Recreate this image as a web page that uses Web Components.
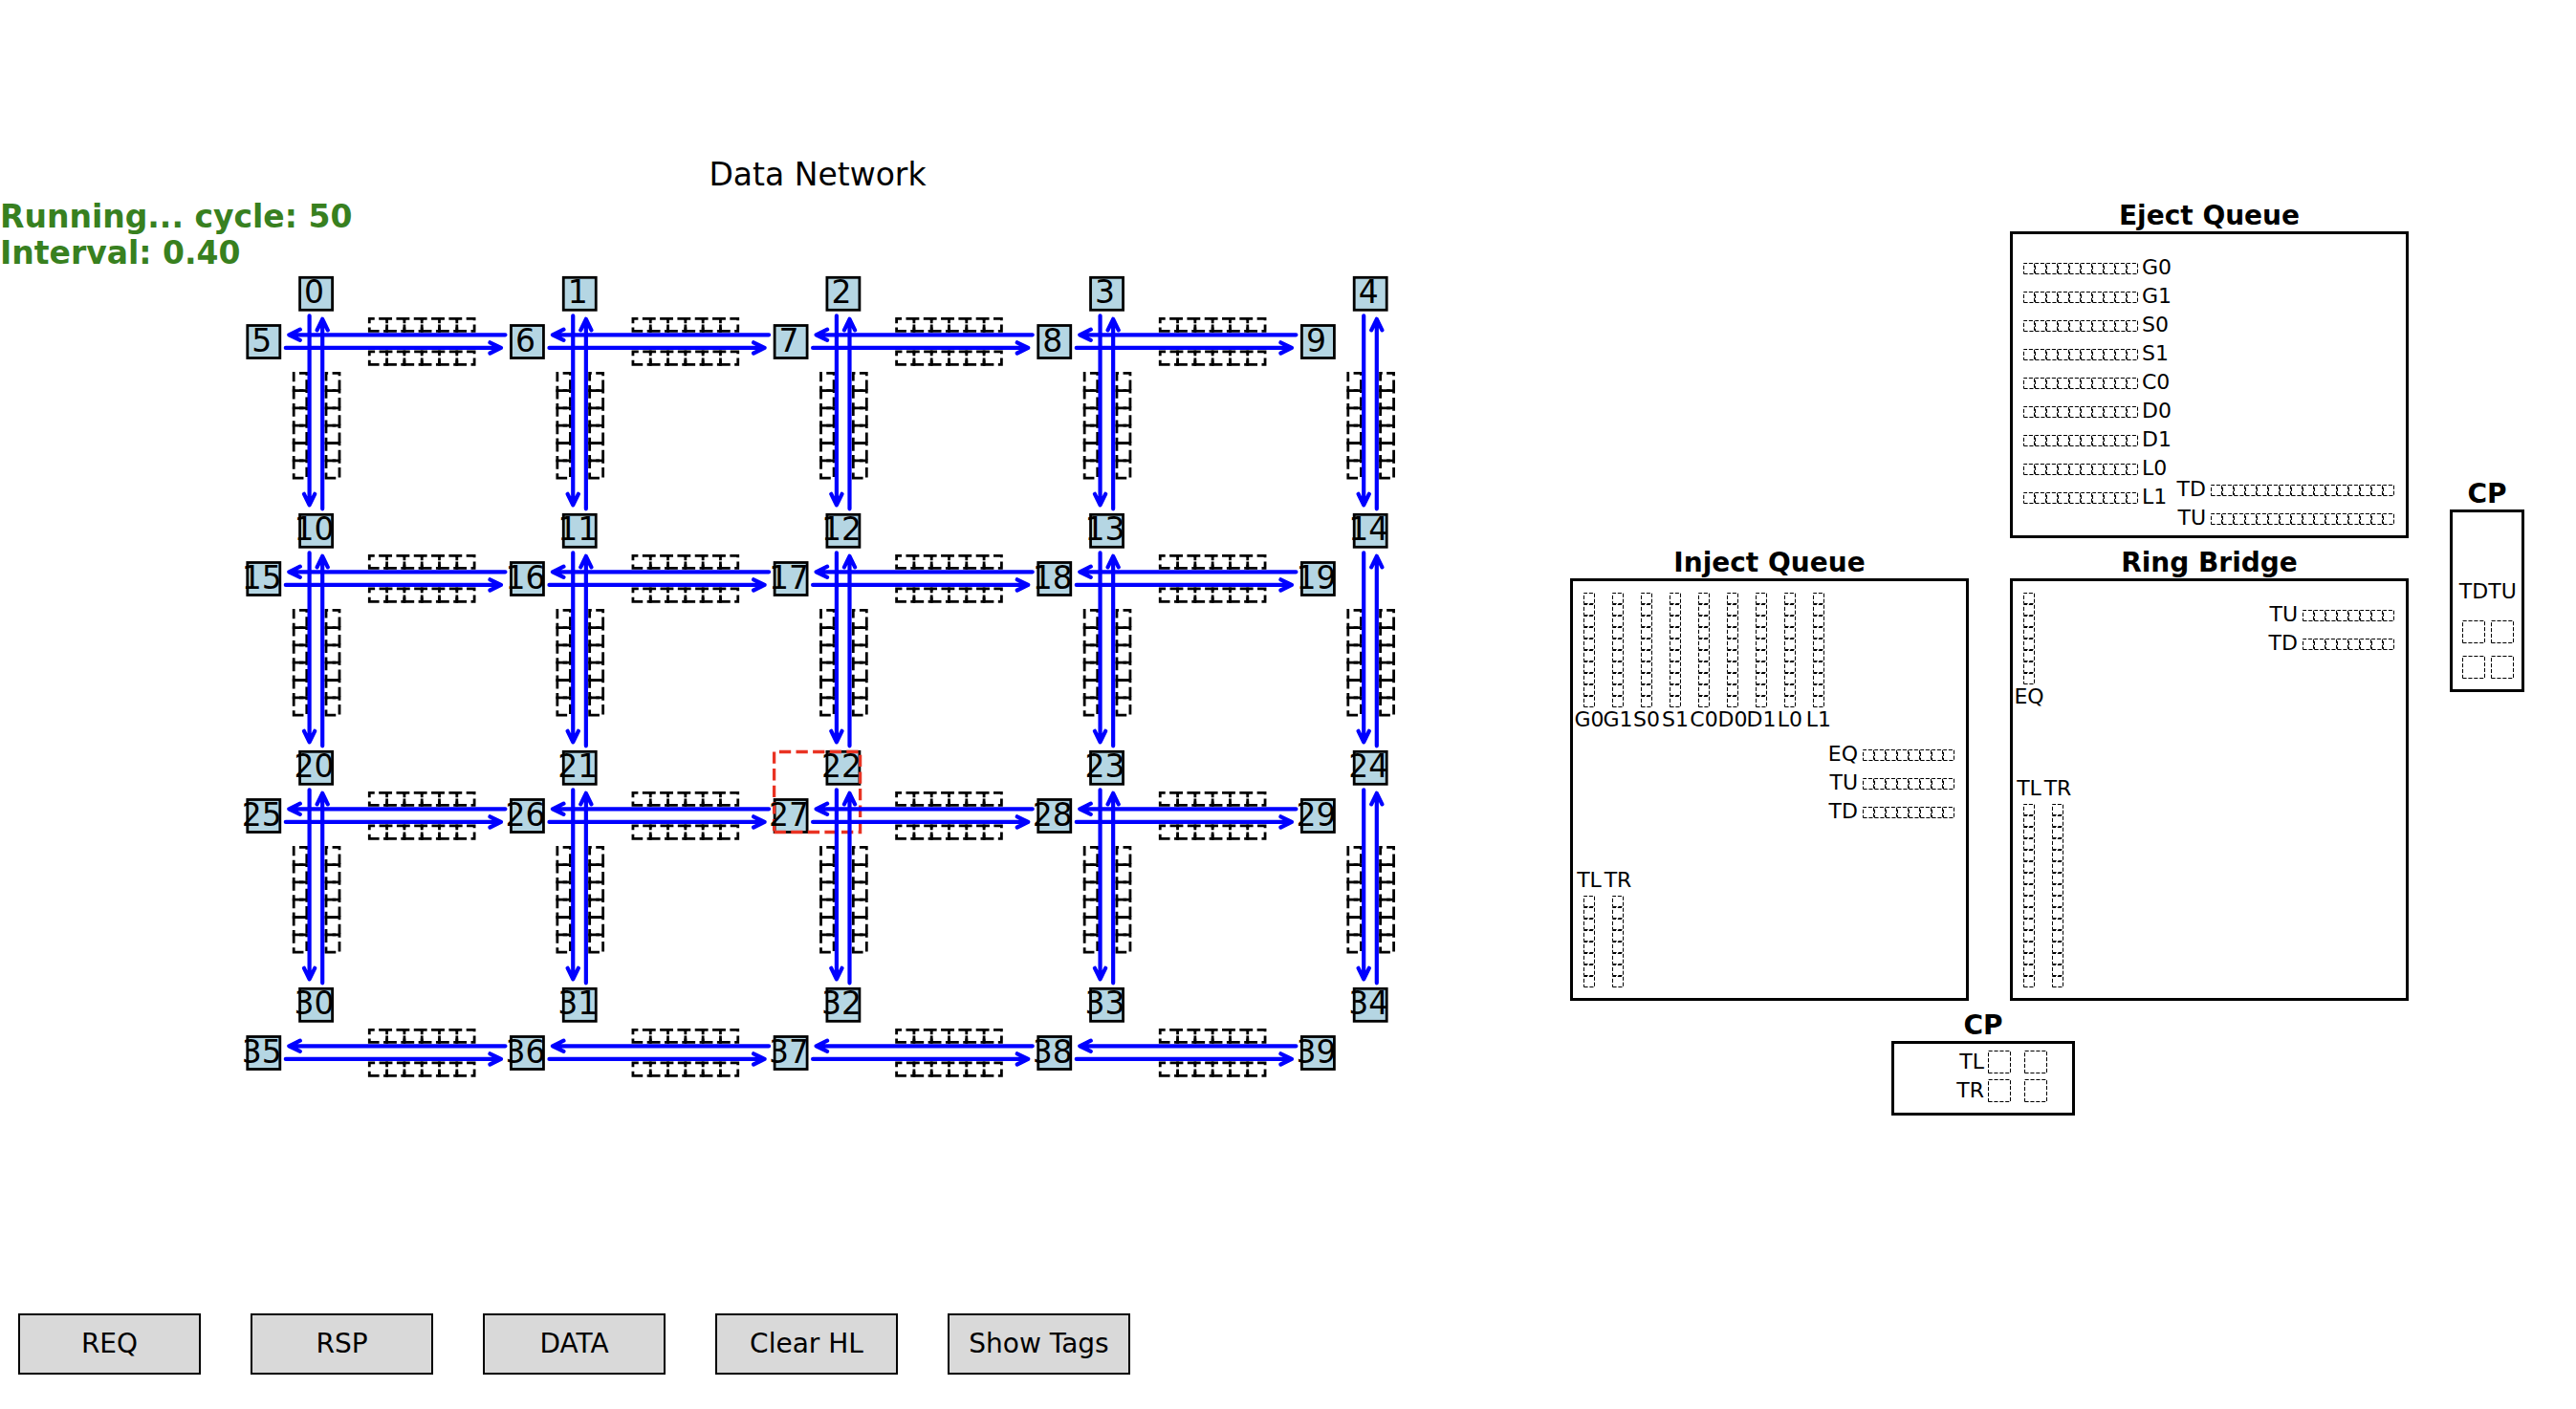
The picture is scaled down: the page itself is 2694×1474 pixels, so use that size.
<!DOCTYPE html>
<html lang="en">
<head>
<meta charset="utf-8">
<title>Data Network</title>
<style>
  html, body { margin: 0; background: #fff; }
  body { font-family: "DejaVu Sans", sans-serif; color: #000; }
</style>
</head>
<body>
<noc-app>
  <run-status slot="status" cycle="50" interval="0.40"></run-status>
  <mesh-view slot="mesh" columns="5" rows="4"></mesh-view>
  <queue-panel slot="detail" class="eject" heading="Eject Queue">
    <div class="stack" slot="content">
      <queue-row name="G0" cells="10" side="end"></queue-row>
      <queue-row name="G1" cells="10" side="end"></queue-row>
      <queue-row name="S0" cells="10" side="end"></queue-row>
      <queue-row name="S1" cells="10" side="end"></queue-row>
      <queue-row name="C0" cells="10" side="end"></queue-row>
      <queue-row name="D0" cells="10" side="end"></queue-row>
      <queue-row name="D1" cells="10" side="end"></queue-row>
      <queue-row name="L0" cells="10" side="end"></queue-row>
      <queue-row name="L1" cells="10" side="end"></queue-row>
    </div>
    <div class="stack low" slot="content">
      <queue-row name="TD" cells="16"></queue-row>
      <queue-row name="TU" cells="16"></queue-row>
    </div>
  </queue-panel>
  <queue-panel slot="detail" class="inject" heading="Inject Queue">
    <div class="lanes" slot="content">
      <queue-lane name="G0" cells="10" side="end"></queue-lane>
      <queue-lane name="G1" cells="10" side="end"></queue-lane>
      <queue-lane name="S0" cells="10" side="end"></queue-lane>
      <queue-lane name="S1" cells="10" side="end"></queue-lane>
      <queue-lane name="C0" cells="10" side="end"></queue-lane>
      <queue-lane name="D0" cells="10" side="end"></queue-lane>
      <queue-lane name="D1" cells="10" side="end"></queue-lane>
      <queue-lane name="L0" cells="10" side="end"></queue-lane>
      <queue-lane name="L1" cells="10" side="end"></queue-lane>
    </div>
    <div class="stack right" slot="content">
      <queue-row name="EQ" cells="8"></queue-row>
      <queue-row name="TU" cells="8"></queue-row>
      <queue-row name="TD" cells="8"></queue-row>
    </div>
    <div class="lanes bottom" slot="content">
      <queue-lane name="TL" cells="8"></queue-lane>
      <queue-lane name="TR" cells="8"></queue-lane>
    </div>
  </queue-panel>
  <queue-panel slot="detail" class="bridge" heading="Ring Bridge">
    <div class="split" slot="content">
      <queue-lane name="EQ" cells="8" side="end"></queue-lane>
      <div class="stack right">
        <queue-row name="TU" cells="8"></queue-row>
        <queue-row name="TD" cells="8"></queue-row>
      </div>
    </div>
    <div class="lanes bottom" slot="content">
      <queue-lane name="TL" cells="16"></queue-lane>
      <queue-lane name="TR" cells="16"></queue-lane>
    </div>
  </queue-panel>
  <queue-panel slot="detail" class="cp-v" heading="CP">
    <div class="lanes bottom" slot="content">
      <queue-lane name="TD" cells="2" size="large"></queue-lane>
      <queue-lane name="TU" cells="2" size="large"></queue-lane>
    </div>
  </queue-panel>
  <queue-panel slot="detail" class="cp-h" heading="CP">
    <div class="stack right" slot="content">
      <queue-row name="TL" cells="2" size="large"></queue-row>
      <queue-row name="TR" cells="2" size="large"></queue-row>
    </div>
  </queue-panel>
  <tool-button slot="tools">REQ</tool-button>
  <tool-button slot="tools">RSP</tool-button>
  <tool-button slot="tools">DATA</tool-button>
  <tool-button slot="tools">Clear HL</tool-button>
  <tool-button slot="tools">Show Tags</tool-button>
</noc-app>

<style>
  .eject  { grid-area: eject; --box-direction: row; --box-padding: 23px 12px 0 11px; --box-height: 321px; }
  .inject { grid-area: inject; --box-padding: 12px 12px 11px 2px; }
  .bridge { grid-area: bridge; --box-padding: 12px 12px 11px 2px; }
  .cp-v   { grid-area: side; align-self: end; margin-bottom: 323px; --box-padding: 0 5px 11px 4px; --box-height: 191px; }
  .cp-h   { grid-area: foot; justify-self: center; width: 192px; margin-right: 13px; --box-padding: 4px 26px 0 0; --box-height: 78px; }
  .stack  { display: flex; flex-direction: column; }
  .lanes  { display: flex; }
  .split  { display: flex; justify-content: space-between; }
  .right  { align-items: flex-end; }
  .low    { margin-left: auto; align-self: flex-end; align-items: flex-end; }
  .bottom { margin-top: auto; }
  .cp-v .lanes { justify-content: flex-end; }
  .inject .right { margin-top: 12px; }
  .bridge .right { padding-top: 11px; }
</style>

<script>
function shadow(host, html) {
  host.attachShadow({ mode: "open" }).innerHTML = html;
}

/* Page frame: mesh on the left, node detail on the right, tools below. */
customElements.define("noc-app", class extends HTMLElement {
  connectedCallback() {
    shadow(this, `
      <style>
        :host { display: flex; flex-direction: column; min-height: 100vh; box-sizing: border-box;
                padding-bottom: 36px; justify-content: space-between; }
        main { display: grid; grid-template-columns: 1530fr 1164fr; align-items: start; }
        h1 { margin: 0; padding: 164px 0 6px 180px; font-size: 33px; line-height: 38px;
             font-weight: 400; text-align: center; }
        .detail { display: grid; padding: 210px 54px 0 112px; column-gap: 43px; row-gap: 10px;
                  grid-template-columns: 417fr 417fr 78fr;
                  grid-template-rows: 353px 474px auto;
                  grid-template-areas: ". eject side" "inject bridge side" "foot foot ."; }
        nav { display: flex; gap: 52px; padding-left: 19px; }
      </style>
      <main>
        <section>
          <h1>Data Network</h1>
          <slot name="status"></slot>
          <slot name="mesh"></slot>
        </section>
        <section class="detail"><slot name="detail"></slot></section>
      </main>
      <nav><slot name="tools"></slot></nav>`);
  }
});

customElements.define("run-status", class extends HTMLElement {
  connectedCallback() {
    shadow(this, `
      <style>
        :host { display: block; font-size: 33px; line-height: 38px; font-weight: 700; color: #38801f; }
        div { white-space: nowrap; }
      </style>
      <div>Running... cycle: ${this.getAttribute("cycle")}</div>
      <div>Interval: ${this.getAttribute("interval")}</div>`);
  }
});

/* Strip of dashed buffer cells; each outline starts at its lower-left corner. */
customElements.define("cell-strip", class extends HTMLElement {
  connectedCallback() {
    const n = +this.getAttribute("cells");
    const vertical = this.hasAttribute("vertical");
    const large = this.getAttribute("size") === "large";
    const side = large ? 23 : 11;
    const pitch = large ? (vertical ? 37 : 38) : 12;
    const along = (n - 1) * pitch + side + 1, across = side + 1;
    let d = "";
    for (let i = 0; i < n; i++) {
      const x = (vertical ? 0 : i * pitch) + 0.5, y = (vertical ? i * pitch : 0) + 0.5;
      d += `<path d="M${x} ${y + side}h${side}v${-side}h${-side}z"/>`;
    }
    const w = vertical ? across : along, h = vertical ? along : across;
    shadow(this, `
      <style>
        :host { display: inline-flex; align-items: baseline; }
        svg { flex: none; fill: none; stroke: #000; stroke-width: 1; stroke-dasharray: 4.11 1.78; }
      </style>
      <svg width="${w}" height="${h}" aria-hidden="true">${d}</svg>`);
  }
});

class QueueBase extends HTMLElement {
  render(vertical, css) {
    const size = this.getAttribute("size") || "small";
    const strip = `<cell-strip cells="${this.getAttribute("cells")}" size="${size}" ${vertical ? "vertical" : ""}></cell-strip>`;
    const label = `<span>${this.getAttribute("name")}</span>`;
    shadow(this, `<style>span { font-size: 22px; line-height: 24px; white-space: nowrap; }${css}</style>` +
      (this.getAttribute("side") === "end" ? strip + label : label + strip));
  }
}
customElements.define("queue-row", class extends QueueBase {
  connectedCallback() {
    this.render(false, `
      :host { display: flex; align-items: baseline; height: 30px; gap: 5px; }
      :host([side="end"]) { gap: 4px; }
      :host([size="large"]) { align-items: center; gap: 4px; }`);
  }
});
customElements.define("queue-lane", class extends QueueBase {
  connectedCallback() {
    this.render(true, `
      :host { display: flex; flex-direction: column; align-items: center; width: 30px; gap: 4px; }
      :host([side="end"]) { gap: 1px; }
      :host([size="large"]) { gap: 18px; }`);
  }
});

customElements.define("queue-panel", class extends HTMLElement {
  connectedCallback() {
    shadow(this, `
      <style>
        :host { display: flex; flex-direction: column; }
        h2 { margin: 0; font-size: 28px; line-height: 32px; font-weight: 700; text-align: center; }
        .box { flex: 1 0 auto; display: flex; flex-direction: var(--box-direction, column);
               box-sizing: border-box; border: 3px solid #000;
               padding: var(--box-padding); min-height: var(--box-height, 0); }
      </style>
      <h2>${this.getAttribute("heading")}</h2>
      <div class="box"><slot name="content"></slot></div>`);
  }
});

customElements.define("tool-button", class extends HTMLElement {
  connectedCallback() {
    shadow(this, `
      <style>
        :host { display: block; }
        button { width: 191px; height: 64px; padding: 0; border: 2px solid #000; border-radius: 0;
                 background: #d9d9d9; color: #000; font: 28px/32px "DejaVu Sans", sans-serif; }
        button:hover { background: #f2f2f2; }
      </style>
      <button type="button"><slot></slot></button>`);
  }
});

/* Mesh of nodes, with paired links and the six buffer slices beside each link. */
customElements.define("mesh-view", class extends HTMLElement {
  connectedCallback() {
    const cols = +this.getAttribute("columns"), rows = +this.getAttribute("rows");
    const px = 275.65, py = 248;
    const top = (i, j) => [330.6 + i * px, 23.3 + j * py];
    const left = (i, j) => [275.8 + i * px, 73.5 + j * py];
    let nodes = "", labels = "", slices = "", links = "";
    const slice = (x, y, w, h) => `<path d="M${x} ${y + h}h${w}v${-h}h${-w}z"/>`;
    const node = ([x, y], id) => {
      nodes += `<rect x="${x - 17}" y="${y - 17}" width="34" height="34"/>`;
      labels += `<text x="${x - 2}" y="${y + 10}">${id}</text>`;
    };
    for (let j = 0; j < rows; j++) {
      for (let i = 0; i < cols; i++) {
        node(top(i, j), j * 2 * cols + i);
        node(left(i, j), (j * 2 + 1) * cols + i);
        if (j < rows - 1) {
          const [x, y] = top(i, j);
          for (let k = 0; k < 6; k++) {
            slices += slice(x - 23.4, y + 83 + k * 18.3, 13.6, 18.3);
            slices += slice(x + 10.4, y + 83 + k * 18.3, 14, 18.3);
          }
          const tip = y + py - 27, up = y + 26.5;
          links += `<path d="M${x - 7} ${y + 23}V${tip}m-5.6 -11.5l5.6 11.5l5.6 -11.5"/>`;
          links += `<path d="M${x + 6.6} ${y + py - 23}V${up}m-5.6 11.5l5.6 -11.5l5.6 11.5"/>`;
        }
        if (i < cols - 1) {
          const [x, y] = left(i, j);
          for (let k = 0; k < 6; k++) {
            slices += slice(x + 110.5 + k * 18.3, y - 24.2, 18.3, 13);
            slices += slice(x + 110.5 + k * 18.3, y + 10.4, 18.3, 13.4);
          }
          const lx = x + 26.5, rx = x + px - 27.5;
          links += `<path d="M${x + px - 23} ${y - 7.2}H${lx}m11.5 -5.6l-11.5 5.6l11.5 5.6"/>`;
          links += `<path d="M${x + 23} ${y + 6.4}H${rx}m-11.5 -5.6l11.5 5.6l-11.5 5.6"/>`;
        }
      }
    }
    const [hx, hy] = left(2, 2);
    shadow(this, `
      <style>
        :host { display: block; }
        svg { display: block; width: 100%; height: auto; }
        .nodes { fill: #b5d6e3; stroke: #000; stroke-width: 2.8; }
        .slices { fill: none; stroke: #000; stroke-width: 2.8; stroke-dasharray: 10.28 4.44; }
        .focus { fill: none; stroke: #e93323; stroke-width: 3.3; stroke-dasharray: 12.3 5.3; }
        .links { fill: none; stroke: #00f; stroke-width: 4.2; stroke-linecap: round; stroke-linejoin: round; }
        text { font-size: 33px; text-anchor: middle; }
      </style>
      <svg viewBox="0 0 1530 848" role="img" aria-label="Data network mesh">
        <g class="nodes">${nodes}</g>
        <g class="slices">${slices}</g>
        <path class="focus" d="M${hx - 17.5} ${hy + 17}h90v-84h-90z"/>
        <g class="links">${links}</g>
        <g>${labels}</g>
      </svg>`);
  }
});
</script>
</body>
</html>
